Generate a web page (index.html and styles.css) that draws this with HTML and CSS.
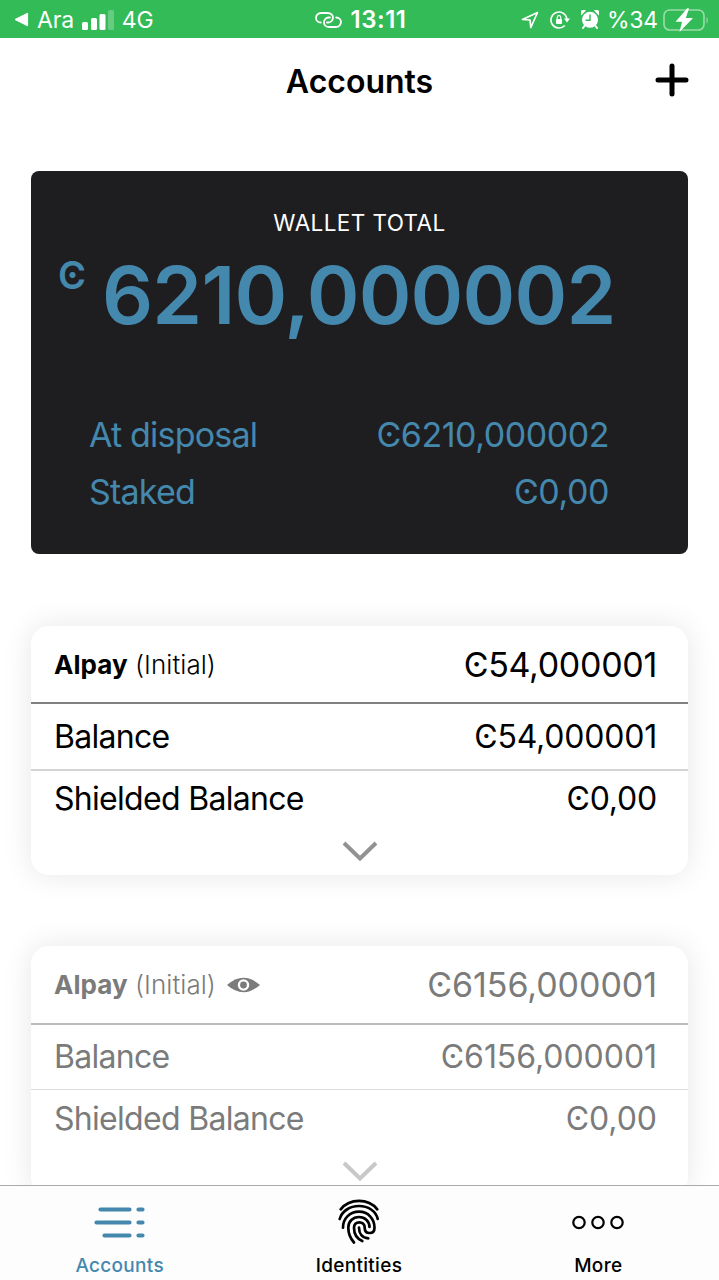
FILE: index.html
```html
<!DOCTYPE html>
<html lang="en">
<head>
  <meta charset="utf-8">
  <title>Accounts</title>
  <meta name="viewport" content="width=device-width, initial-scale=1.0">
  <link rel="stylesheet" href="styles.css">
</head>
<body>
  <div class="status-bar">
    <div class="status-left">
      <svg class="back" width="15" height="15" viewBox="0 0 15 15"><path d="M1 7.5L13.6 1.2v12.6z" fill="#fff" stroke="#fff" stroke-linejoin="round"/></svg>
      <span class="back-label">Ara</span>
      <svg class="signal" width="32" height="20" viewBox="0 0 32 20" fill="#fff">
        <rect x="0" y="12" width="6" height="8" rx="1.5"/>
        <rect x="9" y="8" width="6" height="12" rx="1.5"/>
        <rect x="17.5" y="4" width="6" height="16" rx="1.5"/>
        <rect x="26" y="0" width="6" height="20" rx="1.5" opacity=".25"/>
      </svg>
      <span>4G</span>
    </div>
    <div class="status-center">
      <svg width="27" height="16" viewBox="0 0 27 16" fill="none" stroke="#fff" stroke-width="1.8" stroke-linecap="round">
        <path d="M5.8 10.5C3 10.5 1 8.5 1 5.900S3.200 1 6.200 1h6.300C16 1 18 3.100 18 5.600s-2 4.900-4.500 4.900h-1.500"/>
        <path d="M21.200 5.500C24 5.500 26 7.500 26 10.100S23.800 15 20.800 15h-6.300C11 15 9 12.900 9 10.400s2-4.900 4.500-4.900h1.500"/>
      </svg>
      <span class="clock">13:11</span>
    </div>
    <div class="status-right">
      <svg width="18" height="18" viewBox="0 0 18 18" fill="none" stroke="#fff" stroke-width="1.7" stroke-linejoin="round"><path d="M1.500 8.500L16.500 1.500 9.800 16.500 9 9z"/></svg>
      <svg class="lock" width="20" height="18" viewBox="0 0 20 18" fill="none" stroke="#fff" stroke-width="1.6">
        <path d="M14.800 14.500A8 8 0 1 1 16.900 8"/>
        <path d="M14 7.500h6l-3 4z" fill="#fff" stroke="none"/>
        <rect x="6" y="8" width="6" height="5" rx=".8" fill="#fff" stroke="none"/>
        <path d="M7.200 8V6.400a1.800 1.800 0 0 1 3.600 0V8" stroke-width="1.2"/>
      </svg>
      <svg class="alarm" width="18" height="19" viewBox="0 0 18 19" fill="#fff">
        <circle cx="9" cy="9.8" r="8"/>
        <path d="M.2 5.400A3.400 3.400 0 0 1 5 .6zM17.800 5.400A3.400 3.400 0 0 0 13 .6z"/>
        <path d="M3.800 15.500L2 18M14.200 15.500L16 18" stroke="#fff" stroke-width="2" stroke-linecap="round"/>
        <path d="M9 5v5.200H5" fill="none" stroke="#32bb56" stroke-width="1.4" stroke-linecap="round"/>
      </svg>
      <span class="percent">%34</span>
      <svg class="battery" width="46" height="24" viewBox="0 0 46 24">
        <rect x="1" y="2" width="40" height="20" rx="5.5" fill="none" stroke="#fff" stroke-opacity=".5" stroke-width="1.6"/>
        <path d="M43.500 9v6.500c1.700-.6 1.700-5.900 0-6.500z" fill="#fff" fill-opacity=".5"/>
        <path d="M24.500 0L12.500 13.700h6.500L16.500 24 30 10h-7.200L26 .6z" fill="#fff"/>
      </svg>
    </div>
  </div>

  <header class="header">
    <h1>Accounts</h1>
    <button class="add-btn" aria-label="Add account">
      <svg width="34" height="34" viewBox="0 0 34 34" stroke="#000" stroke-width="5" stroke-linecap="round"><path d="M17 3v28M3 17h28"/></svg>
    </button>
  </header>

  <main class="content">
    <section class="wallet">
      <h2>WALLET TOTAL</h2>
      <div class="total"><span class="currency">Ͼ</span><span class="total-value">6210,000002</span></div>
      <div class="wallet-row"><span class="wallet-label">At disposal</span><span class="amount">Ͼ6210,000002</span></div>
      <div class="wallet-row"><span class="wallet-label">Staked</span><span class="amount">Ͼ0,00</span></div>
    </section>

    <section class="account">
      <div class="account-head">
        <span class="name"><b>Alpay</b> (Initial)</span>
        <span class="amount">Ͼ54,000001</span>
      </div>
      <div class="account-row balance"><span>Balance</span><span class="amount">Ͼ54,000001</span></div>
      <div class="account-row shielded"><span>Shielded Balance</span><span class="amount">Ͼ0,00</span></div>
      <svg class="chevron" width="36" height="22" viewBox="0 0 36 22" fill="none" stroke="#929292" stroke-width="4"><path d="M2 2l16 15.500L34 2"/></svg>
    </section>

    <section class="account readonly">
      <div class="account-head">
        <span class="name"><b>Alpay</b> (Initial)</span>
        <svg class="eye" width="33" height="16" viewBox="0 0 34 16"><path d="M0 8Q17-7 34 8 17 23 0 8z" fill="#7b7b7b"/><circle cx="17" cy="8" r="4.7" fill="#7b7b7b" stroke="#fff" stroke-width="2.4"/></svg>
        <span class="amount">Ͼ6156,000001</span>
      </div>
      <div class="account-row balance"><span>Balance</span><span class="amount">Ͼ6156,000001</span></div>
      <div class="account-row shielded"><span>Shielded Balance</span><span class="amount">Ͼ0,00</span></div>
      <svg class="chevron" width="36" height="22" viewBox="0 0 36 22" fill="none" stroke="#c8c8c8" stroke-width="4"><path d="M2 2l16 15.500L34 2"/></svg>
    </section>
  </main>

  <nav class="tab-bar">
    <a class="tab active">
      <svg width="52" height="46" viewBox="0 0 52 46" fill="none" stroke="#4588ad" stroke-width="4.2" stroke-linecap="round">
        <path d="M6.500 10.500h29M2.500 23.500h33M10.500 36.500h25M44.500 10.500h4M44.500 23.500h4M44.500 36.500h4"/>
      </svg>
      <span>Accounts</span>
    </a>
    <a class="tab">
      <svg width="42" height="46" viewBox="0 0 42 46" fill="none" stroke="#000" stroke-width="2.7" stroke-linecap="round">
        <path d="M2.700 10.300C7 5 13.500 1.900 21 1.900s14 3.100 18.300 8.400"/>
        <path d="M1.700 20C4 12 12 7 21 7s17 5 18.700 13"/>
        <path d="M5 28.700c0-9.500 7-16 16-16s15.500 7 15.500 16c0 3.300-2 5.300-4.900 5.300s-4.900-2-4.900-5.300-2.200-5.400-5.400-5.400-5.300 2.200-5.300 5.400c0 6.300 3 11 8.300 13.300"/>
        <path d="M16 43.500c-3.500-4-5.700-9-5.700-14.800 0-6.200 4.500-10.700 10.700-10.700s10.500 4.500 10.500 10"/>
        <path d="M21 28.700c0 6 3.300 10.300 9.300 10.600"/>
      </svg>
      <span>Identities</span>
    </a>
    <a class="tab">
      <svg width="54" height="46" viewBox="0 0 54 46" fill="none" stroke="#000" stroke-width="2.2"><circle cx="8" cy="23.5" r="5.7"/><circle cx="27" cy="23.5" r="5.7"/><circle cx="46" cy="23.5" r="5.7"/></svg>
      <span>More</span>
    </a>
  </nav>
</body>
</html>
```
FILE: styles.css
```css
* {
  box-sizing: border-box;
}

body {
  margin: 0;
  height: 1280px;
  display: flex;
  flex-direction: column;
  overflow: hidden;
  background: #fff;
  color: #000;
  font-family: Inter, "DejaVu Sans", sans-serif;
}

svg {
  display: block;
  flex: none;
}

.status-bar {
  height: 38px;
  flex: none;
  display: grid;
  grid-template-columns: 1fr auto 1fr;
  align-items: center;
  padding: 1px 10px 0 14px;
  background: #32bb56;
  color: #fff;
  font-size: 23px;
}

.status-left,
.status-center,
.status-right {
  display: flex;
  align-items: center;
}

.back-label {
  margin: 0 8px 0 8px;
}

.signal {
  margin-right: 8px;
}

.status-left,
.percent {
  letter-spacing: -0.2px;
}

.status-center {
  gap: 9px;
  margin-right: 2px;
}

.clock {
  font-size: 24px;
  font-weight: 600;
  letter-spacing: 0.5px;
}

.status-right {
  justify-content: flex-end;
}

.lock {
  margin-left: 11px;
}

.alarm {
  margin: 0 9px 0 11px;
}

.percent {
  margin-left: -1px;
}

.battery {
  margin-left: 5px;
}

.header {
  height: 86px;
  flex: none;
  display: grid;
  grid-template-columns: 60px 1fr 60px;
  align-items: center;
}

.header h1 {
  grid-column: 2;
  margin: 0;
  text-align: center;
  font-size: 32px;
  font-weight: 600;
}

.add-btn {
  padding: 0;
  margin: -2px 0 0 -4px;
  border: none;
  background: none;
}

.content {
  flex: 1;
  min-height: 0;
  overflow: hidden;
  padding: 47px 31px 0;
}

.wallet {
  height: 383px;
  padding: 38px 27px 0;
  border-radius: 8px;
  background: #1e1e20;
  color: #4588ad;
}

.wallet h2 {
  margin: 0;
  color: #fff;
  font-size: 22.5px;
  line-height: 28px;
  font-weight: 400;
  text-align: center;
  letter-spacing: 0.4px;
}

.total {
  display: flex;
  height: 170px;
  font-weight: 600;
}

.currency {
  width: 44px;
  padding-top: 18px;
  font-size: 38px;
  line-height: 40px;
}

.total-value {
  font-size: 80px;
  line-height: 115px;
  letter-spacing: -0.8px;
}

.wallet-row {
  display: flex;
  justify-content: space-between;
  padding: 0 52px 0 31px;
  font-size: 34px;
  line-height: 56.5px;
}

.wallet-label {
  letter-spacing: -0.8px;
}

.amount {
  letter-spacing: -0.45px;
}

.account {
  height: 249px;
  margin-top: 72px;
  border-radius: 18px;
  background: #fff;
  box-shadow: 0 0 30px rgba(0, 0, 0, 0.1);
  font-size: 32px;
  letter-spacing: -0.7px;
}

.account-head {
  display: flex;
  align-items: center;
  height: 78px;
  padding: 0 31px 0 23px;
  border-bottom: 2px solid #808080;
}

.account-head .amount {
  margin-left: auto;
  font-size: 34px;
  letter-spacing: -0.3px;
}

.name {
  font-size: 26px;
  font-weight: 300;
  letter-spacing: 0.05px;
}

.name b {
  font-weight: 700;
}

.account-row {
  display: flex;
  justify-content: space-between;
  padding: 0 31px 0 23px;
}

.account-row .amount {
  letter-spacing: -0.2px;
}

.balance {
  line-height: 65px;
  border-bottom: 2px solid #d4d4d4;
}

.shielded {
  line-height: 56px;
}

.chevron {
  margin: 14px auto 0;
}

.readonly {
  margin-top: 71px;
  color: #7b7b7b;
}

.readonly .account-head {
  height: 79px;
  border-color: #bbb;
}

.readonly .amount {
  letter-spacing: -0.05px;
}

.readonly .balance {
  line-height: 64px;
  border-bottom: 1px solid #ddd;
}

.readonly .shielded {
  line-height: 58px;
}

.readonly .chevron {
  margin-top: 13px;
}

.eye {
  margin-left: 11px;
}

.tab-bar {
  height: 95px;
  flex: none;
  display: grid;
  grid-template-columns: repeat(3, 1fr);
  padding-right: 1px;
  border-top: 1px solid #aaa;
  background: #fdfdfd;
}

.tab {
  display: flex;
  flex-direction: column;
  align-items: center;
  padding-top: 13px;
  font-size: 19px;
  font-weight: 500;
  line-height: 42px;
  letter-spacing: 0.3px;
}

.tab.active {
  color: #4588ad;
}
```
